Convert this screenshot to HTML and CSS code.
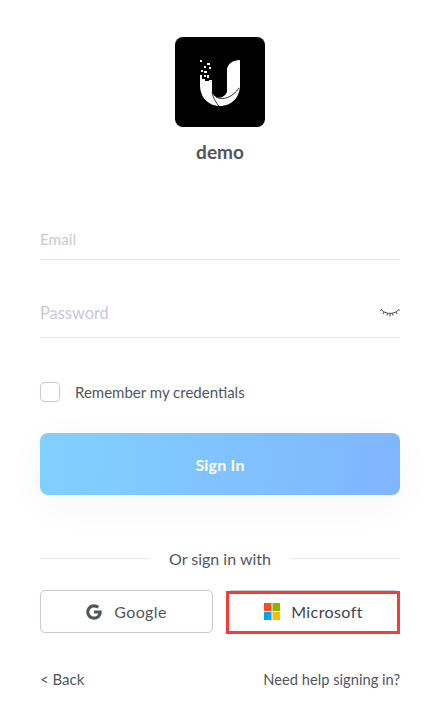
FILE: index.html

```html
<!DOCTYPE html>
<html lang="en">
<head>
  <meta charset="UTF-8" />
  <meta name="viewport" content="width=device-width, initial-scale=1.0" />
  <title>Sign In</title>
  <link rel="stylesheet" href="styles.css">
</head>
<body>
  <div class="login">
    <div class="logo">
      <svg width="50" height="54" viewBox="0 0 50 54">
        <g fill="#fff">
          <rect x="5" y="5" width="2" height="2"/>
          <rect x="12" y="8" width="3" height="2"/>
          <rect x="9" y="11" width="2" height="2"/>
          <rect x="14" y="12" width="2" height="2"/>
          <rect x="6" y="15" width="2" height="2"/>
          <rect x="9" y="16" width="3" height="2"/>
          <rect x="9" y="20" width="2" height="2"/>
          <rect x="12" y="20" width="2" height="3"/>
          <path d="M5 20h2v4h3v2h4v-1h3v11C17 38 19 41 21 42C26 44 30 41 32 37V15C32 9 38 5 45 5V30C45 42 37 51 25 51C13 51 5 42 5 30z"/>
        </g>
        <path d="M17 37C18 43 21 47 24 51.500M21 42C28 46 38 42 44 33" fill="none" stroke="#000" stroke-width="0.800"/>
      </svg>
    </div>
    <div class="site-name">demo</div>

    <form class="login-form">
      <div class="field field-email">
        <input type="text" placeholder="Email" />
      </div>
      <div class="field field-password">
        <input type="password" placeholder="Password" />
        <svg class="eye" width="20" height="10" viewBox="0 0 20 10">
          <path d="M1 1.500L3.500 3.500C7 6 13 6 16.500 3.500L19 1.500M1 1.500L0.500 2.500M19 1.500L19.500 2.500M4 4L3 6M7.500 5.500L7 7.500M10 6V8.500M12.500 5.500L13 7.500M16 4L17 6" fill="none" stroke="#3d4450" stroke-width="1"/>
        </svg>
      </div>
      <label class="remember">
        <span class="checkbox"></span>
        Remember my credentials
      </label>
      <button type="button" class="sign-in">Sign In</button>
    </form>

    <div class="divider"><span>Or sign in with</span></div>

    <div class="providers">
      <button type="button" class="provider">
        <svg width="16" height="16" viewBox="0 0 18 18">
          <path d="M17.600 7.400H9v3.300h4.900c-.6 2.200-2.500 3.500-4.900 3.500-2.900 0-5.200-2.300-5.200-5.200S6.100 3.800 9 3.800c1.300 0 2.500.5 3.400 1.300l2.500-2.500C13.400 1.200 11.300.3 9 .3 4.200.3.300 4.200.3 9s3.900 8.700 8.700 8.700c4.500 0 8.700-3.200 8.700-8.700 0-.5 0-1.100-.1-1.600z" fill="#50565e"/>
        </svg>
        Google
      </button>
      <button type="button" class="provider provider-ms">
        <svg width="16" height="17" viewBox="0 0 16 17">
          <rect width="7.500" height="8" fill="#f25022"/>
          <rect x="8.500" width="7.500" height="8" fill="#7fba00"/>
          <rect y="9" width="7.500" height="8" fill="#00a4ef"/>
          <rect x="8.500" y="9" width="7.500" height="8" fill="#ffb900"/>
        </svg>
        Microsoft
        <span class="highlight"></span>
      </button>
    </div>

    <div class="links">
      <a href="#">&lt; Back</a>
      <a href="#" class="help">Need help signing in?</a>
    </div>
  </div>
</body>
</html>
```

FILE: styles.css

```css
body {
  margin: 0;
  padding: 0;
  font-family: Lato, 'Liberation Sans', sans-serif;
  background: #fff;
  color: #50565e;
}
.login {
  padding: 37px 41px 0 40px;
  display: flex;
  flex-direction: column;
}
.logo {
  width: 90px;
  height: 90px;
  margin: 0 auto;
  background: #000;
  border-radius: 8px;
  display: flex;
  align-items: center;
  justify-content: center;
}
.site-name {
  margin-top: 14px;
  text-align: center;
  font-size: 19px;
  line-height: 22px;
  font-weight: 700;
}
.login-form {
  display: flex;
  flex-direction: column;
  margin-top: 56px;
}
.field {
  position: relative;
  border-bottom: 1px solid #e6e6ec;
}
.field input {
  display: block;
  box-sizing: border-box;
  width: 100%;
  padding: 0;
  border: none;
  outline: none;
  background: transparent;
  font-family: inherit;
  font-size: 15.300px;
  color: #50565e;
}
.field input::placeholder {
  color: #c9c9d6;
  opacity: 1;
}
.field-email input {
  height: 40px;
}
.field-password {
  margin-top: 34px;
}
.field-password input {
  height: 43px;
  padding-bottom: 6px;
  font-size: 16.400px;
}
.eye {
  position: absolute;
  right: 0;
  top: 14px;
}
.remember {
  display: flex;
  align-items: center;
  gap: 15px;
  margin-top: 44px;
  font-size: 15px;
  line-height: 20px;
}
.checkbox {
  width: 18px;
  height: 18px;
  border: 1px solid #c9c9d6;
  border-radius: 4px;
}
.sign-in {
  height: 62px;
  margin-top: 31px;
  border: none;
  border-radius: 8px;
  background: linear-gradient(100deg, #80d1ff, #80b5ff);
  box-shadow: 0 10px 40px rgba(0, 0, 0, 0.04);
  color: #fff;
  font-family: inherit;
  font-size: 16px;
  font-weight: 700;
  letter-spacing: 0.2px;
}
.divider {
  display: flex;
  align-items: center;
  gap: 19px;
  margin-top: 54px;
  font-size: 16px;
  line-height: 20px;
}
.divider::before,
.divider::after {
  content: '';
  flex: 1;
  border-top: 1px solid #e6e6ec;
  margin-top: -2px;
}
.providers {
  display: flex;
  gap: 14px;
  margin-top: 21px;
}
.provider {
  position: relative;
  flex: 1;
  height: 43px;
  display: flex;
  align-items: center;
  justify-content: center;
  gap: 12px;
  background: #fff;
  border: 1px solid #c9c9d6;
  border-radius: 5px;
  color: #50565e;
  font-family: inherit;
  font-size: 16px;
  letter-spacing: 0.4px;
}
.provider-ms {
  gap: 11px;
  color: #3d4450;
}
.highlight {
  position: absolute;
  left: -2px;
  right: -1px;
  top: 0;
  bottom: -2px;
  border: 3px solid #f63b3b;
}
.links {
  display: flex;
  justify-content: space-between;
  margin-top: 36px;
  font-size: 15px;
  line-height: 20px;
}
.links a {
  color: #50565e;
  text-decoration: none;
}
.links .help {
  font-size: 14.700px;
}
```
